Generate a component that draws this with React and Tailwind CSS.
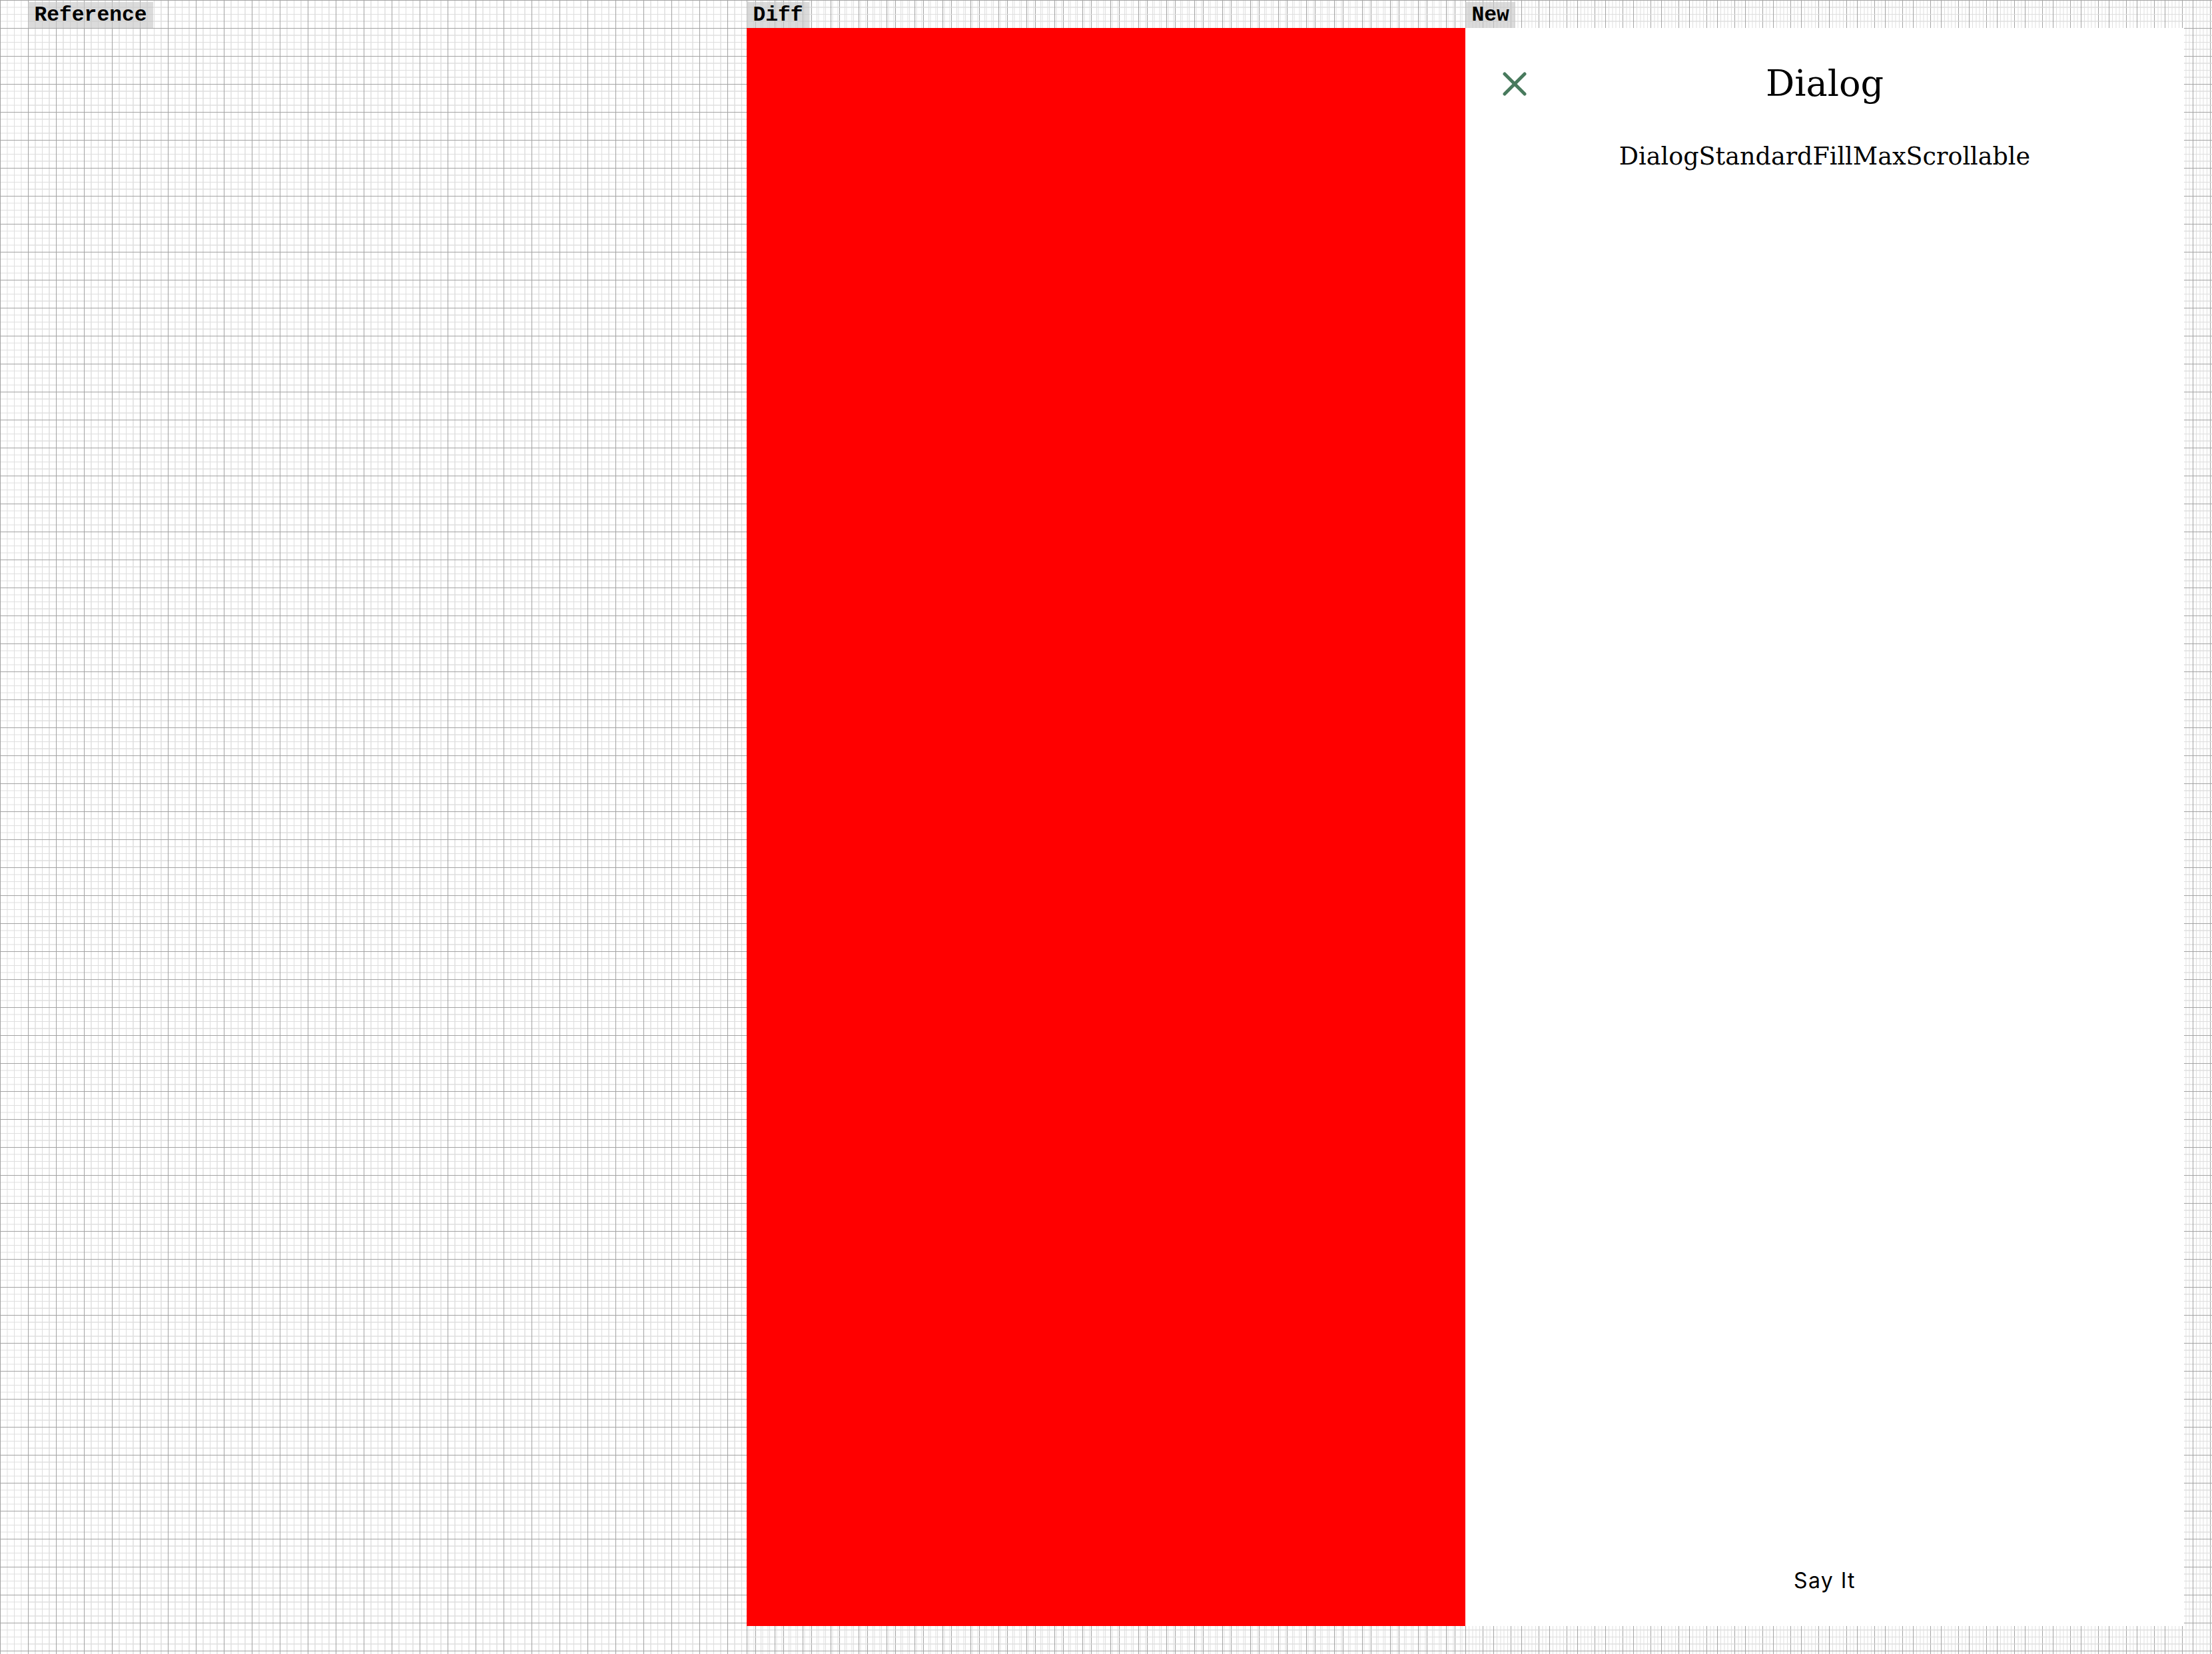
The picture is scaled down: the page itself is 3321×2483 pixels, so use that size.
import React from "react";
import { X } from "lucide-react";

const GRID =
  "bg-[linear-gradient(to_right,#a3a3a3_1px,transparent_1px),linear-gradient(to_bottom,#a3a3a3_1px,transparent_1px),linear-gradient(to_right,#dedede_1px,transparent_1px),linear-gradient(to_bottom,#dedede_1px,transparent_1px)] bg-[size:42px_42px,42px_42px,10.5px_10.5px,10.5px_10.5px]";

function Label({ children }) {
  return (
    <div className="h-[42px] flex items-end">
      <div className="h-[39px] px-[9.5px] flex items-center bg-[rgba(200,200,200,0.65)] text-black font-bold text-[31.3px] leading-none font-['Liberation_Mono',monospace]">
        {children}
      </div>
    </div>
  );
}

export default function App() {
  return (
    <div className={`w-[3321px] h-[2483px] flex bg-white ${GRID}`}>
      <div className="w-[42px] shrink-0" />

      {/* Reference column */}
      <div className={`w-[1079px] shrink-0 flex flex-col ${GRID}`}>
        <Label>Reference</Label>
        <div className="h-[2399px]" />
      </div>

      {/* Diff column */}
      <div className={`w-[1079px] shrink-0 flex flex-col ${GRID}`}>
        <Label>Diff</Label>
        <div className="h-[2399px] bg-[#ff0000]" />
      </div>

      {/* New column */}
      <div className={`w-[1121px] shrink-0 flex flex-col pr-[42px] ${GRID}`}>
        <Label>New</Label>
        <div className="h-[2399px] bg-white flex flex-col">
          <div className="pt-[54px] px-[44px] grid grid-cols-[1fr_auto_1fr] items-center h-[114px]">
            <div className="flex items-center">
              <X size={60} strokeWidth={2} color="#487a5d" />
            </div>
            <div className="text-black text-[54px] leading-none font-['DejaVu_Serif',serif] text-center">
              Dialog
            </div>
            <div />
          </div>
          <div className="mt-[61px] text-center text-black text-[36.5px] leading-none font-['DejaVu_Serif',serif]">
            DialogStandardFillMaxScrollable
          </div>
          <div className="mt-auto pb-[52px] flex justify-center">
            <span className="text-black text-[32px] leading-none tracking-[1.4px] font-['Inter',sans-serif]">
              Say It
            </span>
          </div>
        </div>
      </div>
    </div>
  );
}
